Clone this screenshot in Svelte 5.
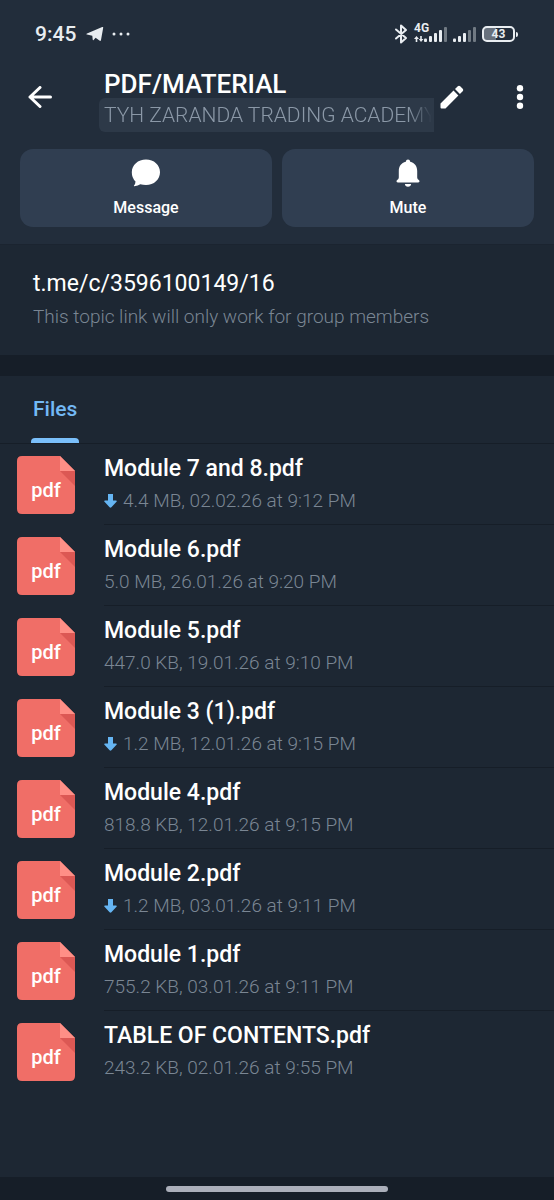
<script lang="ts">
  type SharedFile = {
    name: string;
    size: string;
    date: string;
    remote?: boolean;
  };

  const files: SharedFile[] = [
    { name: "Module 7 and 8.pdf", size: "4.4 MB", date: "02.02.26 at 9:12 PM", remote: true },
    { name: "Module 6.pdf", size: "5.0 MB", date: "26.01.26 at 9:20 PM" },
    { name: "Module 5.pdf", size: "447.0 KB", date: "19.01.26 at 9:10 PM" },
    { name: "Module 3 (1).pdf", size: "1.2 MB", date: "12.01.26 at 9:15 PM", remote: true },
    { name: "Module 4.pdf", size: "818.8 KB", date: "12.01.26 at 9:15 PM" },
    { name: "Module 2.pdf", size: "1.2 MB", date: "03.01.26 at 9:11 PM", remote: true },
    { name: "Module 1.pdf", size: "755.2 KB", date: "03.01.26 at 9:11 PM" },
    { name: "TABLE OF CONTENTS.pdf", size: "243.2 KB", date: "02.01.26 at 9:55 PM" },
  ];
</script>

<div class="screen">
  <header>
    <div class="status">
      <div class="status-side">
        <span class="clock">9:45</span>
        <svg width="18" height="16" viewBox="0 0 18 16" fill="#e9edf1">
          <path d="M1 7.600 16.200 1q1.200-.4 1 .8L15 14q-.4 1.400-1.600.600L9.600 11.800 7.600 14q-.8.600-.9-.6L6.300 9.800 1 8.600Q-.1 8.200 1 7.600ZM7 9.600 13.600 4.600 8.600 10.600Z" />
        </svg>
        <svg width="18" height="4" viewBox="0 0 18 4" fill="#e9edf1">
          <circle cx="2" cy="2" r="1.500" />
          <circle cx="9" cy="2" r="1.500" />
          <circle cx="16" cy="2" r="1.500" />
        </svg>
      </div>
      <div class="status-side indicators">
        <svg width="14" height="20" viewBox="0 0 14 20" fill="none" stroke="#e9edf1" stroke-width="2" stroke-linejoin="round" stroke-linecap="round">
          <path d="M2 5.500 12 14 7 18.500V1.500L12 6 2 14.500" />
        </svg>
        <div class="network">
          <span class="generation">4G</span>
          <svg width="33" height="18" viewBox="0 0 33 18" fill="#e9edf1">
            <path d="M2.500 11 5 14H3.300V17H1.700V14H0ZM7 17 4.800 14H6.200V11H7.800V14H9.500Z" />
            <rect x="10" y="13.500" width="3" height="3.500" rx="1" />
            <rect x="15" y="11" width="3" height="6" rx="1" />
            <rect x="20" y="8" width="3" height="9" rx="1" />
            <rect x="25" y="5" width="3" height="12" rx="1" />
            <rect x="30" y="2" width="3" height="15" rx="1" opacity="0.400" />
          </svg>
        </div>
        <svg width="23" height="18" viewBox="0 0 23 18" fill="#e9edf1">
          <rect x="0" y="13.500" width="3" height="3.500" rx="1" />
          <rect x="5" y="11" width="3" height="6" rx="1" />
          <rect x="10" y="8" width="3" height="9" rx="1" />
          <rect x="15" y="5" width="3" height="12" rx="1" opacity="0.400" />
          <rect x="20" y="2" width="3" height="15" rx="1" opacity="0.400" />
        </svg>
        <div class="battery"><span>43</span></div>
      </div>
    </div>

    <div class="toolbar">
      <button class="icon-button" aria-label="Back">
        <svg width="24" height="22" viewBox="0 0 24 22" fill="none" stroke="#fff" stroke-width="3" stroke-linecap="round" stroke-linejoin="round">
          <path d="M22.500 11H2M12 1.500 2 11 12 20.500" />
        </svg>
      </button>
      <div class="heading">
        <h1>PDF/MATERIAL</h1>
        <div class="group"><span>TYH ZARANDA TRADING ACADEMY</span></div>
      </div>
      <button class="icon-button edit" aria-label="Edit">
        <svg width="24" height="24" viewBox="0 0 24 24" fill="#fff">
          <path d="M0.500 18.500 13.500 5.600 18.400 10.500 5.500 23.500H1.500Q.5 23.500.5 22.500ZM15 4.100 17.800 1.300Q19 .1 20.200 1.300L22.700 3.800Q23.900 5 22.700 6.200L19.900 9Z" />
        </svg>
      </button>
      <button class="icon-button" aria-label="More options">
        <svg width="8" height="24" viewBox="0 0 8 24" fill="#fff">
          <circle cx="4" cy="3.200" r="3.200" />
          <circle cx="4" cy="12" r="3.200" />
          <circle cx="4" cy="20.800" r="3.200" />
        </svg>
      </button>
    </div>

    <div class="actions">
      <button>
        <svg width="30" height="28" viewBox="0 0 30 28" fill="#fff">
          <path d="M15 .5C23 .5 29 6 29 13.200S23 26 15 26Q12 26 9.300 25.200Q7 26.900 3.400 27.200Q2.600 27.200 3 26.500Q4.500 24.500 4.500 22.400Q.8 19 .8 13.200C.8 6 7 .5 15 .5Z" />
        </svg>
        Message
      </button>
      <button>
        <svg width="24" height="28" viewBox="0 0 24 28" fill="#fff">
          <path d="M12 .5Q14 .5 14.200 2.800C18.800 3.900 21.200 7.500 21.200 12V18.500Q21.200 20.300 22.800 21Q23.700 21.600 23.500 22.600Q23.200 23.500 22 23.500H2Q.8 23.500.5 22.600Q.3 21.600 1.200 21Q2.800 20.300 2.800 18.500V12C2.800 7.500 5.200 3.900 9.800 2.800Q10 .5 12 .5ZM8.900 25H15.100Q14.800 27.800 12 27.800T8.900 25Z" />
        </svg>
        Mute
      </button>
    </div>
  </header>

  <section class="info">
    <a href="https://t.me/c/3596100149/16">t.me/c/3596100149/16</a>
    <p>This topic link will only work for group members</p>
  </section>

  <nav>
    <button class="tab">Files</button>
  </nav>

  <ul>
    {#each files as file}
      <li>
        <div class="file-icon">
          <svg width="58" height="58" viewBox="0 0 58 58">
            <path fill="#f06e67" d="M5 0H43L58 15V53Q58 58 53 58H5Q0 58 0 53V5Q0 0 5 0Z" />
            <path fill="#dc5854" d="M43 15H58V30Z" />
            <path fill="#ff8f86" d="M43 0 58 15H43Z" />
          </svg>
          <span>pdf</span>
        </div>
        <div class="details">
          <h2>{file.name}</h2>
          <p>
            {#if file.remote}
              <svg width="13" height="14" viewBox="0 0 13 14" fill="#65b5f3">
                <path d="M4 0H9V6.500H12Q13.500 6.500 12.500 7.800L7.400 13.300Q6.500 14.200 5.600 13.300L.5 7.800Q-.5 6.500 1 6.500H4Z" />
              </svg>
            {/if}
            {file.size}, {file.date}
          </p>
        </div>
      </li>
    {/each}
  </ul>

  <footer><span></span></footer>
</div>

<style>
  :global(body) {
    margin: 0;
    background: #1d2733;
  }
  .screen {
    display: flex;
    flex-direction: column;
    min-height: 100vh;
    background: #1d2733;
    color: #fff;
    font-family: Roboto, sans-serif;
  }
  h1,
  h2,
  p,
  ul {
    margin: 0;
    padding: 0;
  }
  button {
    padding: 0;
    border: none;
    background: none;
    color: inherit;
    font: inherit;
    cursor: pointer;
  }
  svg {
    display: block;
    flex: none;
  }

  header {
    padding-bottom: 17px;
    background: #222d3b;
    border-bottom: 1px solid #1b2430;
  }
  .status {
    display: flex;
    justify-content: space-between;
    height: 68px;
    padding: 0 39px 0 35px;
  }
  .status-side {
    display: flex;
    align-items: center;
    gap: 8px;
    color: #e9edf1;
  }
  .indicators {
    gap: 6px;
  }
  .clock {
    font-size: 21px;
    font-weight: 500;
    margin-right: 2px;
  }
  .network {
    position: relative;
  }
  .generation {
    position: absolute;
    top: -3px;
    left: 0;
    font-size: 12px;
    line-height: 12px;
    font-weight: 700;
  }
  .battery {
    position: relative;
    box-sizing: border-box;
    width: 33px;
    height: 16px;
    border: 2px solid #e9edf1;
    border-radius: 5px;
    background: linear-gradient(90deg, #68717d 43%, transparent 43%);
    font-size: 12px;
    line-height: 12px;
    font-weight: 700;
    text-align: center;
  }
  .battery::after {
    content: "";
    position: absolute;
    top: 4px;
    right: -5px;
    width: 2px;
    height: 5px;
    border-radius: 0 2px 2px 0;
    background: #e9edf1;
  }

  .toolbar {
    display: flex;
    height: 81px;
    padding-right: 14px;
  }
  .icon-button {
    display: flex;
    align-items: center;
    justify-content: center;
    width: 40px;
    height: 58px;
  }
  .icon-button:first-child {
    width: 80px;
    margin-right: 19px;
  }
  .icon-button.edit {
    width: 36px;
    margin-right: 30px;
  }
  .heading {
    flex: 1;
    min-width: 0;
  }
  h1 {
    padding: 2px 0 0 5px;
    font-size: 26px;
    line-height: 28px;
    font-weight: 500;
  }
  .group {
    padding: 0 2px 0 5px;
    border-radius: 6px 0 0 6px;
    background: #2d3948;
    color: #8b98a7;
    font-size: 21px;
    line-height: 34px;
    font-weight: 300;
  }
  .group span {
    display: block;
    overflow: hidden;
    white-space: nowrap;
    mask-image: linear-gradient(90deg, #000 calc(100% - 24px), transparent);
  }

  .actions {
    display: flex;
    gap: 10px;
    padding: 0 20px;
  }
  .actions button {
    display: flex;
    flex: 1;
    flex-direction: column;
    align-items: center;
    gap: 11px;
    padding: 10px 0 9px;
    border-radius: 13px;
    background: #303e51;
    font-size: 16px;
    line-height: 20px;
    font-weight: 500;
  }

  .info {
    padding: 22px 33px 24px;
    border-bottom: 21px solid #161e28;
  }
  .info a {
    display: block;
    margin-bottom: 2px;
    color: #fff;
    font-size: 23px;
    line-height: 34px;
    text-decoration: none;
  }
  .info p {
    color: #7a8693;
    font-size: 19px;
    line-height: 28px;
    font-weight: 300;
  }

  nav {
    padding: 0 31px;
    border-bottom: 1px solid #161e28;
  }
  .tab {
    position: relative;
    display: block;
    height: 67px;
    padding: 0 2px;
    color: #73b9f5;
    font-size: 21px;
    line-height: 67px;
    font-weight: 500;
  }
  .tab::after {
    content: "";
    position: absolute;
    right: 0;
    bottom: 0;
    left: 0;
    height: 5px;
    border-radius: 4px 4px 0 0;
    background: #7abffa;
  }

  ul {
    flex: 1;
    padding-bottom: 85px;
    list-style: none;
  }
  li {
    display: flex;
    gap: 29px;
    padding-left: 17px;
  }
  .file-icon {
    position: relative;
    padding-top: 12px;
  }
  .file-icon span {
    position: absolute;
    top: 34px;
    right: 0;
    left: 0;
    font-size: 20px;
    line-height: 24px;
    font-weight: 500;
    text-align: center;
  }
  .details {
    flex: 1;
    padding: 9px 0 7px;
    border-bottom: 1px solid #161e28;
  }
  li:last-child .details {
    border-bottom-color: transparent;
  }
  h2 {
    font-size: 23px;
    line-height: 32px;
    font-weight: 500;
  }
  .details p {
    display: flex;
    align-items: center;
    gap: 6px;
    color: #7a8693;
    font-size: 19px;
    line-height: 32px;
    font-weight: 300;
  }

  footer {
    display: flex;
    justify-content: center;
    height: 14px;
    padding-top: 9px;
    background: #161e28;
  }
  footer span {
    width: 40%;
    height: 6px;
    border-radius: 3px;
    background: #abafba;
  }
</style>
